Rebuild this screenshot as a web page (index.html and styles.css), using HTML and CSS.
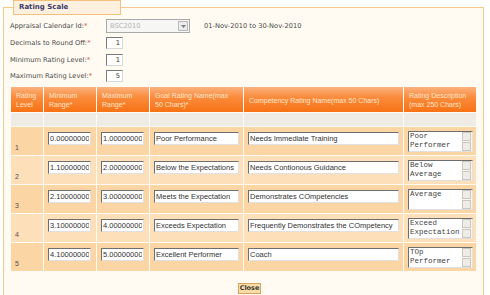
FILE: index.html
```html
<!DOCTYPE html>
<html>

<head>
    <meta charset="utf-8" />
    <title>Rating Scale</title>
    <link rel="stylesheet" href="styles.css">
</head>

<body>
    <fieldset class="scale-box">
        <legend>Rating Scale</legend>
        <div class="form-row">
            <label>Appraisal Calendar Id:<span class="req">*</span></label>
            <span class="select-wrap">
                <select class="calendar" disabled>
                    <option>BSC2010</option>
                </select>
                <span class="select-arrow">
                    <svg width="5" height="3" viewBox="0 0 5 3"><path d="M0 0 L5 0 L2.5 3 Z" fill="#7d7d7d" /></svg>
                </span>
            </span>
            <span class="period">01-Nov-2010 to 30-Nov-2010</span>
        </div>
        <div class="form-row">
            <label>Decimals to Round Off:<span class="req">*</span></label>
            <input class="small-input" type="text" value="1">
        </div>
        <div class="form-row">
            <label>Minimum Rating Level:<span class="req">*</span></label>
            <input class="small-input" type="text" value="1">
        </div>
        <div class="form-row">
            <label>Maximum Rating Level:<span class="req">*</span></label>
            <input class="small-input" type="text" value="5">
        </div>

        <table class="scale-table">
            <colgroup>
                <col class="col-level">
                <col class="col-min">
                <col class="col-max">
                <col class="col-goal">
                <col class="col-comp">
                <col class="col-desc">
            </colgroup>
            <thead>
                <tr>
                    <th>Rating Level</th>
                    <th>Minimum Range*</th>
                    <th>Maximum Range*</th>
                    <th class="goal-head">Goal Rating Name(max 50 Chars)*</th>
                    <th>Competency Rating Name(max 50 Chars)</th>
                    <th>Rating Description (max 250 Chars)</th>
                </tr>
            </thead>
            <tbody>
                <tr class="blank-row">
                    <td></td><td></td><td></td><td></td><td></td><td></td>
                </tr>
                <tr class="odd">
                    <td class="level">1</td>
                    <td><input class="range" type="text" value="0.00000000"></td>
                    <td><input class="range" type="text" value="1.00000000"></td>
                    <td><input class="goal" type="text" value="Poor Performance"></td>
                    <td><input class="comp" type="text" value="Needs Immediate Training"></td>
                    <td>
                        <div class="desc-box">
                            <textarea class="desc">Poor Performer</textarea>
                            <div class="scroll"><span></span><span></span></div>
                        </div>
                    </td>
                </tr>
                <tr class="even">
                    <td class="level">2</td>
                    <td><input class="range" type="text" value="1.10000000"></td>
                    <td><input class="range" type="text" value="2.00000000"></td>
                    <td><input class="goal" type="text" value="Below the Expectations"></td>
                    <td><input class="comp" type="text" value="Needs Contionous Guidance"></td>
                    <td>
                        <div class="desc-box">
                            <textarea class="desc">Below Average</textarea>
                            <div class="scroll"><span></span><span></span></div>
                        </div>
                    </td>
                </tr>
                <tr class="odd">
                    <td class="level">3</td>
                    <td><input class="range" type="text" value="2.10000000"></td>
                    <td><input class="range" type="text" value="3.00000000"></td>
                    <td><input class="goal" type="text" value="Meets the Expectation"></td>
                    <td><input class="comp" type="text" value="Demonstrates COmpetencies"></td>
                    <td>
                        <div class="desc-box">
                            <textarea class="desc">Average</textarea>
                            <div class="scroll"><span></span><span></span></div>
                        </div>
                    </td>
                </tr>
                <tr class="even">
                    <td class="level">4</td>
                    <td><input class="range" type="text" value="3.10000000"></td>
                    <td><input class="range" type="text" value="4.00000000"></td>
                    <td><input class="goal" type="text" value="Exceeds Expectation"></td>
                    <td><input class="comp" type="text" value="Frequently Demonstrates the COmpetency"></td>
                    <td>
                        <div class="desc-box">
                            <textarea class="desc">Exceed Expectation</textarea>
                            <div class="scroll"><span></span><span></span></div>
                        </div>
                    </td>
                </tr>
                <tr class="odd">
                    <td class="level">5</td>
                    <td><input class="range" type="text" value="4.10000000"></td>
                    <td><input class="range" type="text" value="5.00000000"></td>
                    <td><input class="goal" type="text" value="Excellent Performer"></td>
                    <td><input class="comp" type="text" value="Coach"></td>
                    <td>
                        <div class="desc-box">
                            <textarea class="desc">TOp Performer</textarea>
                            <div class="scroll"><span></span><span></span></div>
                        </div>
                    </td>
                </tr>
            </tbody>
        </table>

        <div class="actions">
            <button class="close-btn" type="button">Close</button>
        </div>
    </fieldset>
</body>

</html>
```

FILE: styles.css
```css
body {
    margin: 0;
    background: #ffffff;
    font-family: "DejaVu Sans", Verdana, sans-serif;
    font-size: 6.7px;
    color: #4a4a4a;
}

.scale-box {
    margin: 0 0 0 3px;
    width: 481px;
    box-sizing: border-box;
    padding: 3px 0 0 6px;
    border: 1px solid #f6c88e;
    border-bottom: none;
    background: #fffbf2;
    min-height: 300px;
}

.scale-box legend {
    margin-left: 3px;
    height: 15px;
    box-sizing: border-box;
    padding: 0 52px 0 5px;
    border: 1px solid #f4c07c;
    background: #fdf0de;
    font-weight: bold;
    font-size: 7px;
    line-height: 13px;
    color: #3d3a6b;
}

.form-row {
    display: flex;
    align-items: center;
    height: 16.7px;
}

.form-row label {
    width: 96px;
}

.req {
    color: #e0443e;
}

.select-wrap {
    position: relative;
    display: inline-block;
    height: 14px;
}

.calendar {
    appearance: none;
    width: 84px;
    height: 14px;
    padding: 0 0 0 3px;
    border: 1px solid #a9a9a9;
    background: #f6f6f4;
    font-family: "DejaVu Sans", Verdana, sans-serif;
    font-size: 6.7px;
    color: #b4b4b4;
    opacity: 1;
}

.select-arrow {
    position: absolute;
    top: 2px;
    right: 2px;
    width: 10px;
    height: 10px;
    border: 1px solid #b9b9b9;
    background: #ebebeb;
    display: flex;
    align-items: center;
    justify-content: center;
    box-sizing: border-box;
}

.period {
    margin-left: 14px;
}

.small-input {
    width: 17px;
    height: 12px;
    padding: 0 2px 0 0;
    box-sizing: border-box;
    text-align: right;
    font-family: "DejaVu Sans", Verdana, sans-serif;
    font-size: 6.7px;
    color: #333;
    background: #ffffff;
    border: 1px solid;
    border-color: #7a7a7a #d8d8d8 #d8d8d8 #7a7a7a;
}

.scale-table {
    margin-top: 1px;
    width: 467px;
    table-layout: fixed;
    border-collapse: separate;
    border-spacing: 1px;
    background: #fffaf2;
    font-family: "Liberation Sans", Arial, sans-serif;
}

.col-level { width: 32px; }
.col-min { width: 52px; }
.col-max { width: 52px; }
.col-goal { width: 93px; }
.col-comp { width: 159px; }
.col-desc { width: 72px; }

.scale-table th {
    height: 25px;
    padding: 3px 2px 0 5px;
    box-sizing: border-box;
    text-align: left;
    vertical-align: middle;
    font-weight: normal;
    font-size: 7px;
    line-height: 8.5px;
    color: #ffe6cc;
    background: linear-gradient(#fab27e, #fa8c3e 40%, #f77214);
}

.scale-table th.goal-head {
    padding-right: 10px;
}

.scale-table td {
    box-sizing: border-box;
    padding: 0 0 0 4px;
    vertical-align: top;
}

.blank-row td {
    height: 13px;
    background: #efece5;
}

.odd td {
    height: 28px;
    background: #fcd5a4;
}

.even td {
    height: 28px;
    background: #fddfba;
}

.scale-table td.level {
    vertical-align: bottom;
    padding-bottom: 3px;
    font-size: 7px;
    line-height: 8px;
    color: #5b5046;
}

.range,
.goal,
.comp {
    display: block;
    margin-top: 5px;
    height: 13px;
    box-sizing: border-box;
    padding: 0 1px;
    font-family: "Liberation Sans", Arial, sans-serif;
    font-size: 7.5px;
    color: #333;
    background: #ffffff;
    border: 1px solid;
    border-color: #6e6e6e #e0e0e0 #e0e0e0 #6e6e6e;
}

.range { width: 43px; }
.goal { width: 85px; }
.comp { width: 151px; }

.desc-box {
    display: flex;
    margin-top: 4px;
    width: 65px;
    height: 21px;
    box-sizing: border-box;
    background: #ffffff;
    border: 1px solid;
    border-color: #6e6e6e #e0e0e0 #e0e0e0 #6e6e6e;
}

.desc {
    flex: 1;
    min-width: 0;
    padding: 0 0 0 1px;
    border: none;
    resize: none;
    overflow: hidden;
    font-family: "Liberation Mono", "Courier New", monospace;
    font-size: 7.5px;
    line-height: 9.5px;
    color: #444;
    background: transparent;
}

.scroll {
    display: flex;
    flex-direction: column;
    gap: 1px;
    width: 9px;
    padding: 0 1px 0 0;
    background: #f7f5f0;
}

.scroll span {
    flex: 1;
    background: #efece7;
    border: 1px solid #cbc7bf;
}

.actions {
    display: flex;
    justify-content: center;
    padding: 11px 0 0 12px;
    width: 467px;
    box-sizing: border-box;
}

.close-btn {
    padding: 0 1px;
    height: 11px;
    border: 1px solid #d9a45e;
    background: #fcdca6;
    font-family: "DejaVu Sans", Verdana, sans-serif;
    font-weight: bold;
    font-size: 6.5px;
    line-height: 9px;
    color: #3a3a3a;
}
```
